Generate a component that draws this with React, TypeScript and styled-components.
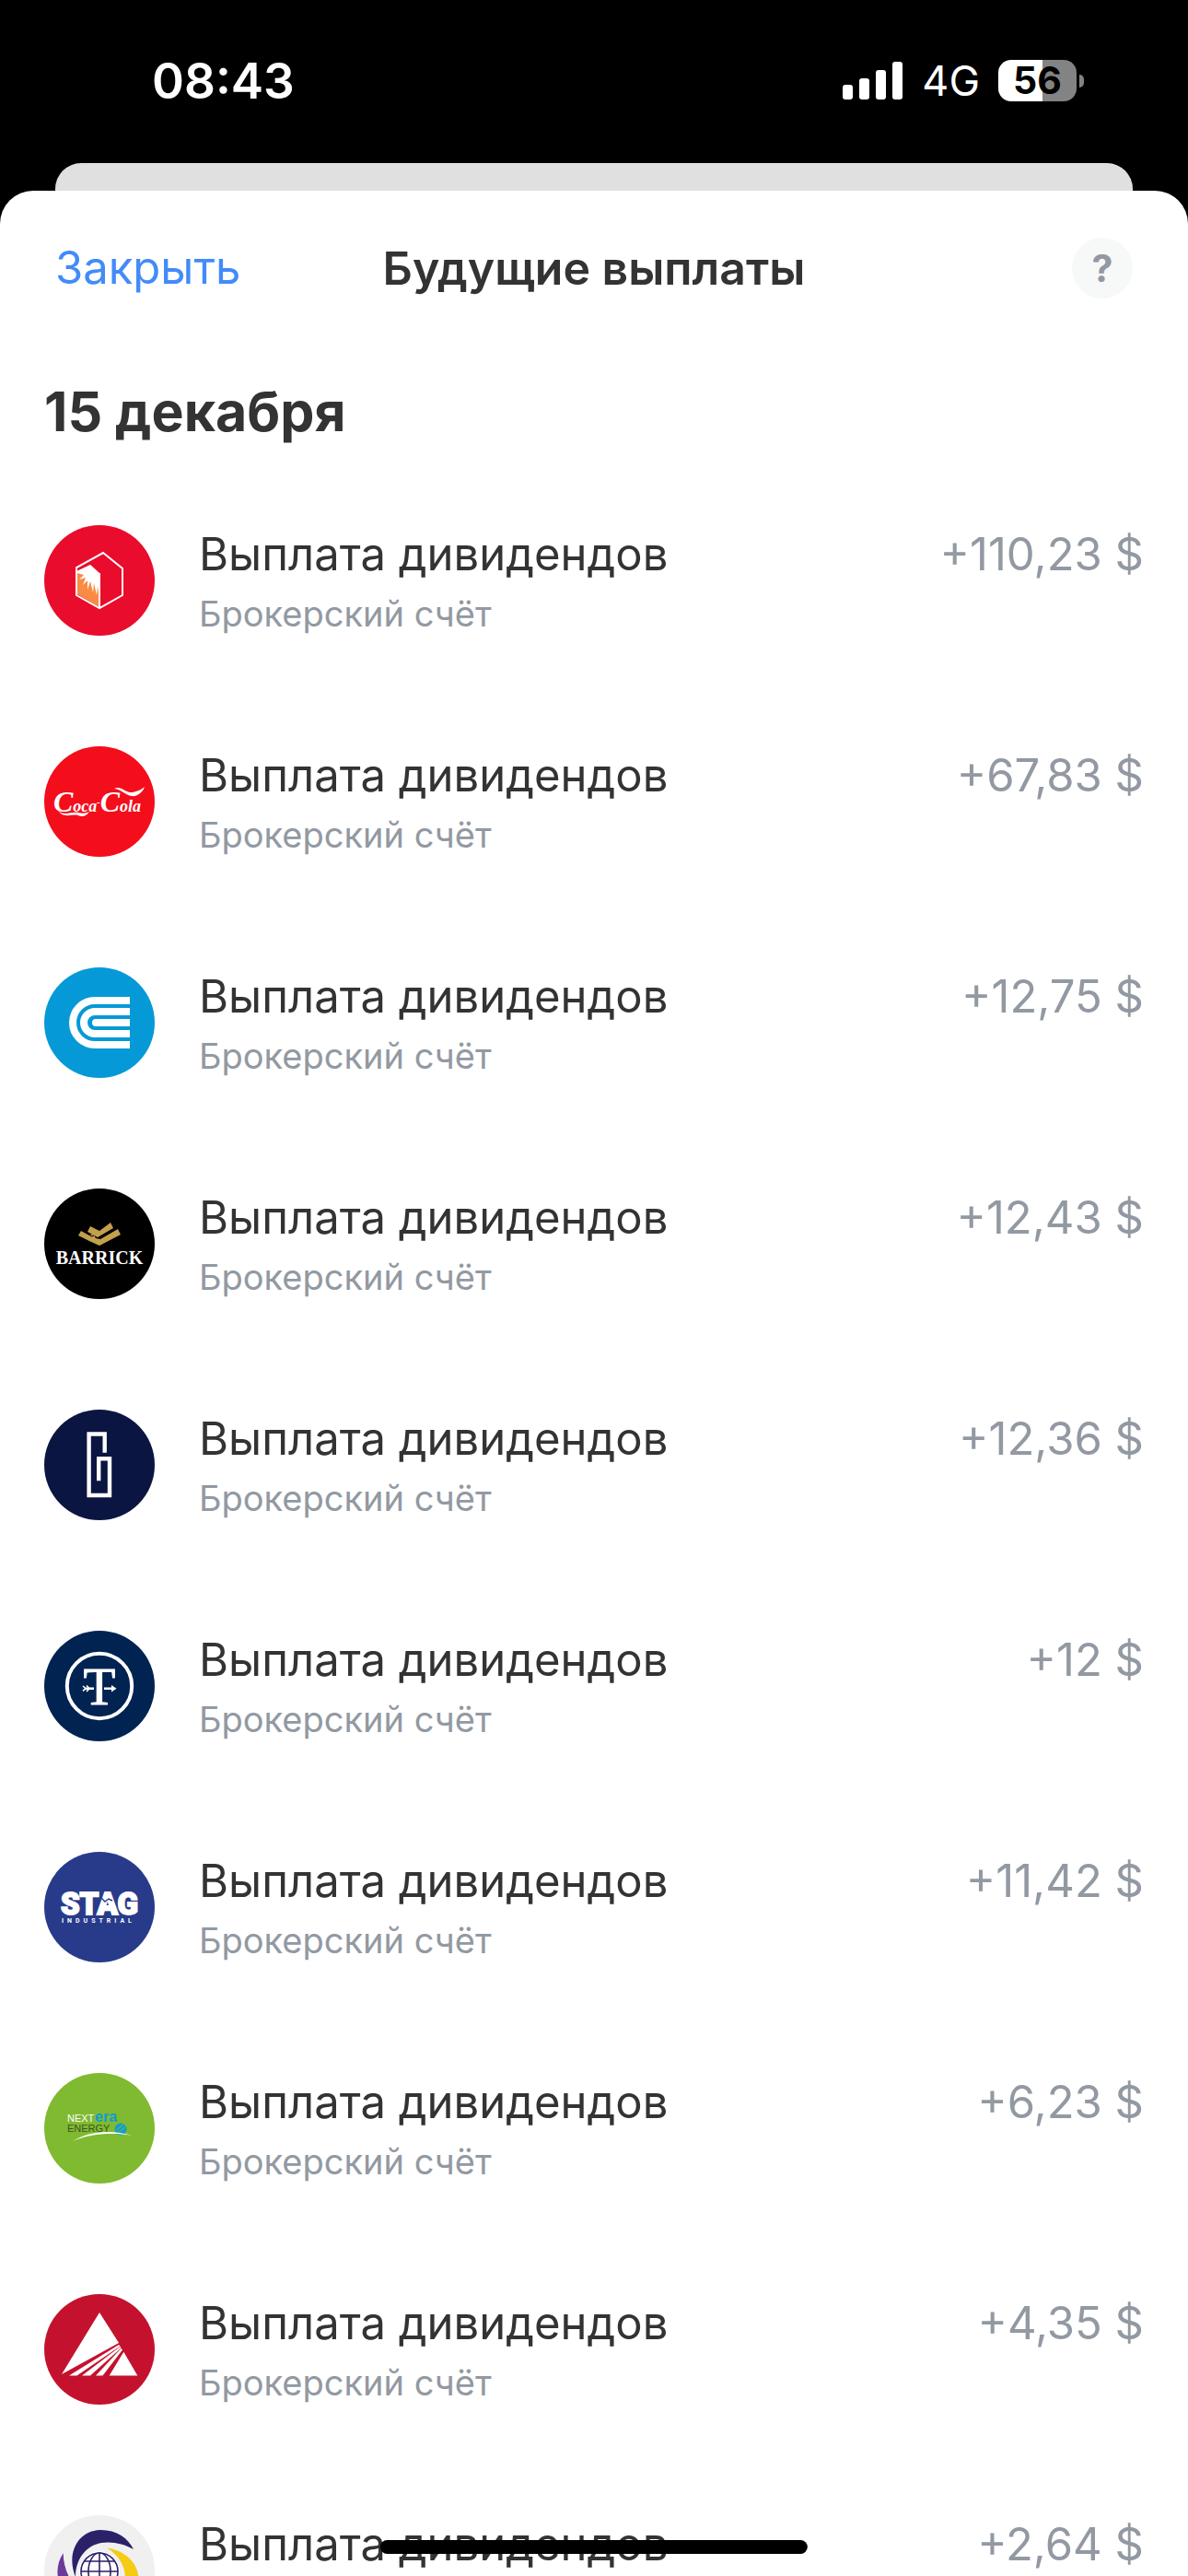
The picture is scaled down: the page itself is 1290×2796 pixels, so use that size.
import type { ReactNode } from 'react';
import styled, { createGlobalStyle } from 'styled-components';

interface Payment {
  id: string;
  amount: string;
  background: string;
  logo: ReactNode;
}

const PAYMENTS: Payment[] = [
  { id: 'hex', amount: '+110,23 $', background: '#ea0c2c', logo: <HexLogo /> },
  { id: 'coca-cola', amount: '+67,83 $', background: '#f40d1b', logo: <CocaColaLogo /> },
  { id: 'edison', amount: '+12,75 $', background: '#0699d7', logo: <EdisonLogo /> },
  { id: 'barrick', amount: '+12,43 $', background: '#000000', logo: <BarrickLogo /> },
  { id: 'letter-g', amount: '+12,36 $', background: '#0a1641', logo: <LetterGLogo /> },
  { id: 'letter-t', amount: '+12 $', background: '#012352', logo: <LetterTLogo /> },
  { id: 'stag', amount: '+11,42 $', background: '#283b8b', logo: <StagLogo /> },
  { id: 'nextera', amount: '+6,23 $', background: '#80ba31', logo: <NexteraLogo /> },
  { id: 'triangle', amount: '+4,35 $', background: '#c4122e', logo: <TriangleLogo /> },
  { id: 'globe', amount: '+2,64 $', background: '#f0f0f1', logo: <GlobeLogo /> },
];

function App() {
  return (
    <>
      <GlobalStyle />
      <StScreen>
        <StStatusBar>
          <StTime>08:43</StTime>
          <StStatusIcons>
            <SignalIcon />
            <StNetwork>4G</StNetwork>
            <StBattery>
              <StBatteryBody>56</StBatteryBody>
              <StBatteryCap />
            </StBattery>
          </StStatusIcons>
        </StStatusBar>
        <StBackSheet />
        <StSheet>
          <StHeader>
            <StCloseButton type="button">Закрыть</StCloseButton>
            <h1>Будущие выплаты</h1>
            <StHelpButton type="button" aria-label="Справка">
              ?
            </StHelpButton>
          </StHeader>
          <StContent>
            <StDate>15 декабря</StDate>
            <StPaymentList>
              {PAYMENTS.map(({ id, amount, background, logo }) => (
                <StPayment key={id}>
                  <StLogo $background={background}>{logo}</StLogo>
                  <StInfo>
                    <StPaymentTitle>Выплата дивидендов</StPaymentTitle>
                    <StAccount>Брокерский счёт</StAccount>
                  </StInfo>
                  <StAmount>{amount}</StAmount>
                </StPayment>
              ))}
            </StPaymentList>
          </StContent>
        </StSheet>
        <StHomeIndicator />
      </StScreen>
    </>
  );
}

export default App;

function SignalIcon() {
  return (
    <svg width="66" height="42" viewBox="0 0 66 42" fill="#fff" aria-hidden="true">
      <rect x="0" y="25" width="11" height="16" rx="3" />
      <rect x="18" y="18" width="11" height="23" rx="3" />
      <rect x="36" y="9" width="11" height="32" rx="3" />
      <rect x="54" y="0" width="11" height="41" rx="3" />
    </svg>
  );
}

function HexLogo() {
  return (
    <svg viewBox="0 0 120 120" aria-hidden="true">
      <path d="M36 51 L50 43 L60 52 V89 L36 75Z" fill="#f98b45" />
      <path
        d="M35 50 L50 43 L60 52 V82 L58 66 L57 76 L54 63 L53 73 L50 61 L47 70 L47 60 L42 65 L45 57 L38 59 L43 54 L36 52Z"
        fill="#fff"
      />
      <path d="M64 30 L85 47 V76 L60 90 L35 76 V46Z" fill="none" stroke="#fff" strokeWidth="2" />
      <path d="M60 52 V90" stroke="#fff" strokeWidth="2" />
    </svg>
  );
}

function CocaColaLogo() {
  return (
    <svg viewBox="0 0 120 120" aria-hidden="true">
      <text
        x="10"
        y="71"
        fill="#fff"
        fontFamily="Liberation Serif, serif"
        fontStyle="italic"
        fontWeight="700"
        fontSize="18"
      >
        <tspan fontSize="32">C</tspan>oca<tspan fontSize="10" dy="-7">-</tspan><tspan fontSize="32" dy="7">C</tspan>ola
      </text>
      <path
        d="M15 70 C22 76 28 71 37 72 C41 73 45 73 49 71 C46 76 41 77 37 75 C29 73 22 79 15 70Z"
        fill="#fff"
      />
      <path
        d="M76 46 C83 42 88 51 96 50 C101 49 106 47 109 44 C107 50 101 55 95 54 C88 53 84 47 76 46Z"
        fill="#fff"
      />
    </svg>
  );
}

function EdisonLogo() {
  return (
    <svg viewBox="0 0 120 120" fill="none" stroke="#fff" strokeWidth="8" aria-hidden="true">
      <path d="M93 36 H55 a24 24 0 0 0 0 48 H93" />
      <path d="M93 48 H55 a12 12 0 0 0 0 24 H93" />
      <path d="M93 56 H56 a4 4 0 0 0 0 8 H93Z" fill="#fff" stroke="none" />
    </svg>
  );
}

function BarrickLogo() {
  return (
    <svg viewBox="0 0 120 120" aria-hidden="true">
      <path d="M50 41 L60 46 L72 37 L75 43 L58 53 L47 47Z" fill="#c2a04e" />
      <path d="M40 46 L49 51 L53 49 L56 54 L61 55 L80 44 L83 50 L60 62 L49 57 L37 51Z" fill="#c2a04e" />
      <path d="M48 49 L51 52 L54 51" fill="none" stroke="#000" strokeWidth="1" />
      <text
        x="60"
        y="82"
        textAnchor="middle"
        fill="#fff"
        fontFamily="Liberation Serif, serif"
        fontWeight="700"
        fontSize="20"
      >
        BARRICK
      </text>
    </svg>
  );
}

function LetterGLogo() {
  return (
    <svg viewBox="0 0 120 120" aria-hidden="true">
      <path
        d="M65.7 46.7 V26.5 H48.6 V93 H71 V53.3 H59.2 V77.3"
        fill="none"
        stroke="#fff"
        strokeWidth="4.4"
      />
    </svg>
  );
}

function LetterTLogo() {
  return (
    <svg viewBox="0 0 120 120" aria-hidden="true">
      <circle cx="60" cy="60" r="35.2" fill="none" stroke="#fff" strokeWidth="4" />
      <text
        x="60"
        y="80"
        textAnchor="middle"
        fill="#fff"
        stroke="#fff"
        strokeWidth="1"
        fontFamily="Liberation Serif, serif"
        fontSize="57"
      >
        T
      </text>
      <path d="M45 62.7 H54 M65 62.7 H75" stroke="#fff" strokeWidth="2.4" />
      <path d="M42 60 L45 62.7 L42 65.4 M46 59.5 L49 62.7 L46 66" fill="none" stroke="#fff" strokeWidth="1.6" />
      <path d="M73 59 L78.5 62.7 L73 66.4Z" fill="#fff" />
    </svg>
  );
}

function StagLogo() {
  return (
    <svg viewBox="0 0 120 120" fill="#fff" fontFamily="Roboto, sans-serif" aria-hidden="true">
      <text
        x="60"
        y="68"
        textAnchor="middle"
        stroke="#fff"
        strokeWidth="1.8"
        fontWeight="900"
        fontSize="33"
      >
        STAG
      </text>
      <path d="M62 50 L66 54 L70 51 L74 53" fill="none" stroke="#283b8b" strokeWidth="1.4" />
      <text x="19" y="77" fontWeight="700" fontSize="7" letterSpacing="4">
        INDUSTRIAL
      </text>
    </svg>
  );
}

function NexteraLogo() {
  return (
    <svg viewBox="0 0 120 120" fontFamily="Liberation Sans, sans-serif" aria-hidden="true">
      <text x="25" y="53" fill="#fff" fontSize="11">
        NEXT
      </text>
      <text x="55" y="53" fill="#0f9ccf" fontWeight="700" fontSize="16">
        era
      </text>
      <text x="25" y="64" fill="#3c5423" fontSize="11">
        ENERGY
      </text>
      <circle cx="83" cy="61" r="6.5" fill="#0f9ccf" />
      <path d="M78 62 L86 56 M80 65 L88 59" stroke="#80ba31" strokeWidth="1" />
      <path d="M31 74 C48 63 72 61 96 68 C72 64 50 66 31 74Z" fill="#fff" />
    </svg>
  );
}

function TriangleLogo() {
  return (
    <svg viewBox="0 0 120 120" fill="#fff" aria-hidden="true">
      <path d="M60 20 L81 53 L19 87Z" />
      <path d="M27 88.5 L81 55 L82.5 56.5 L35.5 88.5Z" />
      <path d="M41 88.5 L82.5 57 L83.5 58.5 L50 88.5Z" />
      <path d="M56 88.5 L83.5 59 L85 60.5 L63.5 88.5Z" />
      <path d="M86.3 62.7 L101.3 88.5 H70.7Z" />
    </svg>
  );
}

function GlobeLogo() {
  const swoosh = 'M34 67 C24 43 35 17 61 16 C79 16 91 25 97 37 C87 31 73 28 62 30 C45 33 34 48 34 67Z';

  return (
    <svg viewBox="0 0 120 120" aria-hidden="true">
      <path d={swoosh} fill="#2a2169" />
      <path d={swoosh} fill="#f5cb13" transform="rotate(120 60 61)" />
      <path d={swoosh} fill="#6b3a98" transform="rotate(240 60 61)" />
      <circle cx="60" cy="61" r="22" fill="#fff" />
      <g fill="none" stroke="#2a2169" strokeWidth="1.6">
        <circle cx="60" cy="61" r="20" />
        <ellipse cx="60" cy="61" rx="12" ry="20" />
        <path d="M60 41 V81 M40 61 H80 M44 50 H76 M44 72 H76" />
      </g>
    </svg>
  );
}

const GlobalStyle = createGlobalStyle`
  * {
    box-sizing: border-box;
    margin: 0;
    padding: 0;
  }

  body {
    background-color: #000;
    font-family: Inter, 'Liberation Sans', sans-serif;
  }

  button {
    border: none;
    background: none;
    font-family: inherit;
    cursor: pointer;
  }
`;

const StScreen = styled.div`
  display: flex;
  flex-direction: column;

  height: 100vh;
  overflow: hidden;
`;

const StStatusBar = styled.div`
  display: flex;
  justify-content: space-between;
  align-items: center;
  flex-shrink: 0;

  height: 177px;
  padding: 0 113px 2px 165px;

  color: #fff;
`;

const StTime = styled.time`
  font-weight: 600;
  font-size: 53px;
  line-height: 60px;
`;

const StStatusIcons = styled.div`
  display: flex;
  align-items: center;
`;

const StNetwork = styled.span`
  margin: 0 20px;

  font-size: 45px;
  line-height: 60px;
`;

const StBattery = styled.div`
  display: flex;
  align-items: center;
  gap: 3px;
`;

const StBatteryBody = styled.span`
  width: 85px;
  border-radius: 14px;
  background: linear-gradient(to right, #fff 56%, #838383 56%);

  color: #000;
  font-weight: 700;
  font-size: 41px;
  line-height: 45px;
  text-align: center;
`;

const StBatteryCap = styled.span`
  width: 5px;
  height: 14px;
  border-radius: 0 5px 5px 0;
  background-color: #838383;
`;

const StBackSheet = styled.div`
  flex-shrink: 0;

  height: 30px;
  margin: 0 60px;
  border-radius: 28px 28px 0 0;
  background-color: #e0e0e0;
`;

const StSheet = styled.main`
  display: flex;
  flex-direction: column;
  flex: 1;

  min-height: 0;
  border-radius: 36px 36px 0 0;
  background-color: #fff;
`;

const StHeader = styled.header`
  display: grid;
  grid-template-columns: 1fr auto 1fr;
  align-items: center;
  flex-shrink: 0;

  height: 168px;
  padding: 0 60px;

  & > h1 {
    color: #333;
    font-weight: 600;
    font-size: 50px;
    line-height: 60px;
  }
`;

const StCloseButton = styled.button`
  justify-self: start;

  color: #428bf9;
  font-size: 49px;
  line-height: 60px;
`;

const StHelpButton = styled.button`
  justify-self: end;

  width: 66px;
  height: 66px;
  border-radius: 50%;
  background-color: #f7f8f8;

  color: #9299a2;
  font-weight: 700;
  font-size: 41px;
  line-height: 66px;
`;

const StContent = styled.section`
  flex: 1;

  min-height: 0;
  padding: 36px 48px 0;
  overflow-y: auto;
  scrollbar-width: none;
`;

const StDate = styled.h2`
  margin-bottom: 87px;

  color: #333;
  font-weight: 700;
  font-size: 59px;
  line-height: 72px;
`;

const StPaymentList = styled.ul`
  list-style: none;
`;

const StPayment = styled.li`
  display: flex;
  align-items: flex-start;
  gap: 48px;

  padding-bottom: 120px;
`;

const StLogo = styled.div<{ $background: string }>`
  flex-shrink: 0;

  width: 120px;
  height: 120px;
  border-radius: 50%;
  background-color: ${(props) => props.$background};
  overflow: hidden;

  & > svg {
    display: block;
  }
`;

const StInfo = styled.div`
  flex: 1;
`;

const StPaymentTitle = styled.h3`
  color: #333;
  font-weight: 400;
  font-size: 49px;
  line-height: 64px;
`;

const StAccount = styled.p`
  margin-top: 8px;

  color: #9299a2;
  font-size: 38px;
  line-height: 48px;
`;

const StAmount = styled.p`
  color: #9299a2;
  font-size: 49px;
  line-height: 64px;
`;

const StHomeIndicator = styled.div`
  position: fixed;
  bottom: 24px;
  left: 50%;

  width: 36%;
  height: 15px;
  border-radius: 8px;
  background-color: #000;
  transform: translateX(-50%);
`;
